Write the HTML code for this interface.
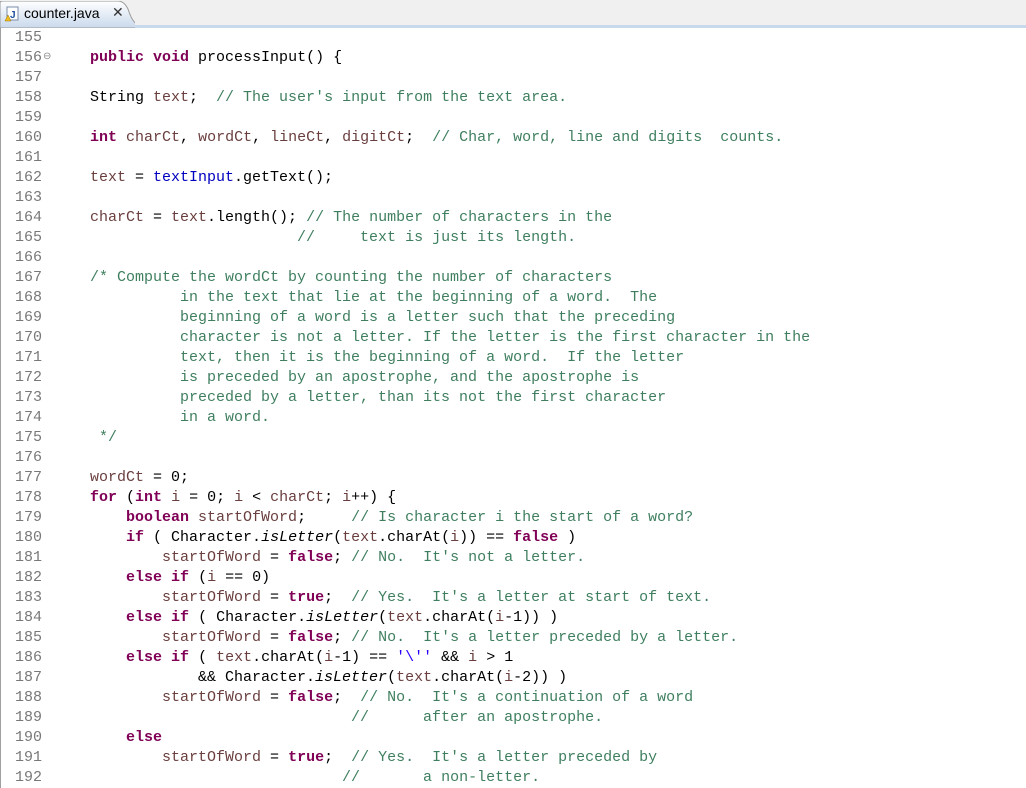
<!DOCTYPE html>
<html><head><meta charset="utf-8"><style>
body{margin:0;width:1026px;height:788px;overflow:hidden;background:#fff;font-family:"Liberation Mono",monospace}
.bar{position:absolute;left:0;top:0;width:1026px;height:28px;background:#f0f0f0}
.band{position:absolute;left:0;top:25px;width:1026px;height:3px;background:#c9d9ec}
.tab{position:absolute;left:0;top:1px;width:135px;height:27px}
.ttl{position:absolute;left:24px;top:5px;font:14px "Liberation Sans",sans-serif;color:#000}
.x{position:absolute;left:112px;top:4px;font:14px "Liberation Sans",sans-serif;color:#333}
.ed{position:absolute;left:0;top:28px;width:1026px;height:760px;border-left:1px solid #a0a0a0}
.ln{position:absolute;left:15px;top:28px;font-size:15px;line-height:20px;color:#787878;white-space:pre}
.ln div{height:20px;line-height:20px;position:relative}
.code{position:absolute;left:90px;top:48px;font-size:15px;line-height:20px;color:#000;white-space:pre;margin:0;font-family:"Liberation Mono",monospace}
.k{color:#7f0055;font-weight:bold}.c{color:#3f7f5f}.v{color:#6a3e3e}.f{color:#0000c0}.s{color:#2a00ff}.i{font-style:italic}
</style></head><body>
<div class="bar"></div><div class="band"></div>
<svg class="tab" width="135" height="27"><defs><linearGradient id="g" x1="0" y1="0" x2="0" y2="1"><stop offset="0" stop-color="#fff"/><stop offset="1" stop-color="#c9d9ec"/></linearGradient></defs><path d="M0 27 V2 Q0 0 3 0 H118 Q124 0 128 8 Q133 24 140 24 V27 Z" fill="url(#g)" stroke="#999" stroke-width="1"/></svg>
<svg style="position:absolute;left:4px;top:6px" width="16" height="16"><rect x="3" y="1" width="11" height="13" fill="#fff" stroke="#7a8ca8"/><text x="6" y="12" font-size="10" font-family="Liberation Sans" fill="#1f4f9f" font-weight="bold">J</text><path d="M1 15 L4 9 L7 15Z" fill="#f0c020" stroke="#a07000" stroke-width=".5"/></svg>
<div class="ttl">counter.java</div><div class="x">✕</div>
<div class="ed"></div>
<div class="ln"><div>155</div><div>156<span style="position:absolute;left:28px;top:0;font-size:10px;color:#888">⊖</span></div><div>157</div><div>158</div><div>159</div><div>160</div><div>161</div><div>162</div><div>163</div><div>164</div><div>165</div><div>166</div><div>167</div><div>168</div><div>169</div><div>170</div><div>171</div><div>172</div><div>173</div><div>174</div><div>175</div><div>176</div><div>177</div><div>178</div><div>179</div><div>180</div><div>181</div><div>182</div><div>183</div><div>184</div><div>185</div><div>186</div><div>187</div><div>188</div><div>189</div><div>190</div><div>191</div><div>192</div></div>
<pre class="code"><span class="k">public</span> <span class="k">void</span> processInput() {

String <span class="v">text</span>;  <span class="c">// The user's input from the text area.</span>

<span class="k">int</span> <span class="v">charCt</span>, <span class="v">wordCt</span>, <span class="v">lineCt</span>, <span class="v">digitCt</span>;  <span class="c">// Char, word, line and digits  counts.</span>

<span class="v">text</span> = <span class="f">textInput</span>.getText();

<span class="v">charCt</span> = <span class="v">text</span>.length(); <span class="c">// The number of characters in the</span>
                       <span class="c">//     text is just its length.</span>

<span class="c">/* Compute the wordCt by counting the number of characters
          in the text that lie at the beginning of a word.  The
          beginning of a word is a letter such that the preceding
          character is not a letter. If the letter is the first character in the
          text, then it is the beginning of a word.  If the letter
          is preceded by an apostrophe, and the apostrophe is
          preceded by a letter, than its not the first character
          in a word.
 */</span>

<span class="v">wordCt</span> = 0;
<span class="k">for</span> (<span class="k">int</span> <span class="v">i</span> = 0; <span class="v">i</span> &lt; <span class="v">charCt</span>; <span class="v">i</span>++) {
    <span class="k">boolean</span> <span class="v">startOfWord</span>;     <span class="c">// Is character i the start of a word?</span>
    <span class="k">if</span> ( Character.<span class="i">isLetter</span>(<span class="v">text</span>.charAt(<span class="v">i</span>)) == <span class="k">false</span> )
        <span class="v">startOfWord</span> = <span class="k">false</span>; <span class="c">// No.  It's not a letter.</span>
    <span class="k">else</span> <span class="k">if</span> (<span class="v">i</span> == 0)
        <span class="v">startOfWord</span> = <span class="k">true</span>;  <span class="c">// Yes.  It's a letter at start of text.</span>
    <span class="k">else</span> <span class="k">if</span> ( Character.<span class="i">isLetter</span>(<span class="v">text</span>.charAt(<span class="v">i</span>-1)) )
        <span class="v">startOfWord</span> = <span class="k">false</span>; <span class="c">// No.  It's a letter preceded by a letter.</span>
    <span class="k">else</span> <span class="k">if</span> ( <span class="v">text</span>.charAt(<span class="v">i</span>-1) == <span class="s">'\''</span> &amp;&amp; <span class="v">i</span> &gt; 1
            &amp;&amp; Character.<span class="i">isLetter</span>(<span class="v">text</span>.charAt(<span class="v">i</span>-2)) )
        <span class="v">startOfWord</span> = <span class="k">false</span>;  <span class="c">// No.  It's a continuation of a word</span>
                             <span class="c">//      after an apostrophe.</span>
    <span class="k">else</span>
        <span class="v">startOfWord</span> = <span class="k">true</span>;  <span class="c">// Yes.  It's a letter preceded by</span>
                            <span class="c">//       a non-letter.</span></pre>
</body></html>
